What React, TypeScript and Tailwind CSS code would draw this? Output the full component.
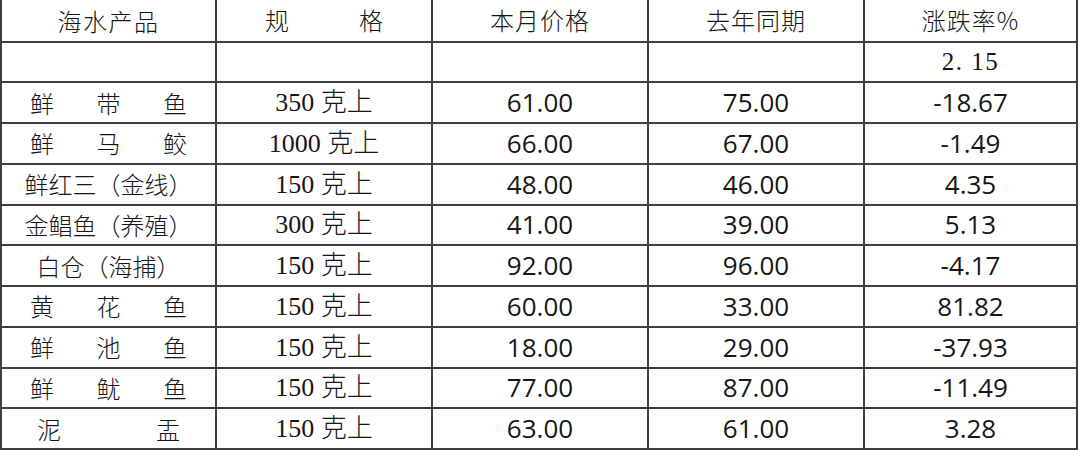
import React from "react";

type Row = {
  name: string[] | string;
  nameW?: string;
  spec: string;
  a: string;
  b: string;
  c: string;
};

const rows: Row[] = [
  { name: ["鲜", "带", "鱼"], spec: "350 克上", a: "61.00", b: "75.00", c: "-18.67" },
  { name: ["鲜", "马", "鲛"], spec: "1000 克上", a: "66.00", b: "67.00", c: "-1.49" },
  { name: "鲜红三（金线）", spec: "150 克上", a: "48.00", b: "46.00", c: "4.35" },
  { name: "金鲳鱼（养殖）", spec: "300 克上", a: "41.00", b: "39.00", c: "5.13" },
  { name: "白仓（海捕）", spec: "150 克上", a: "92.00", b: "96.00", c: "-4.17" },
  { name: ["黄", "花", "鱼"], spec: "150 克上", a: "60.00", b: "33.00", c: "81.82" },
  { name: ["鲜", "池", "鱼"], spec: "150 克上", a: "18.00", b: "29.00", c: "-37.93" },
  { name: ["鲜", "鱿", "鱼"], spec: "150 克上", a: "77.00", b: "87.00", c: "-11.49" },
  { name: ["泥", "盂"], nameW: "w-[143px]", spec: "150 克上", a: "63.00", b: "61.00", c: "3.28" },
];

const cjk = "[font-family:'Noto_Sans_CJK_SC',sans-serif]";
const serif = "[font-family:'Liberation_Serif','Noto_Sans_CJK_SC',serif]";
const num = "[font-family:'Open_Sans',sans-serif]";

const cell =
  "flex items-center justify-center border-r-2 border-b-2 border-[#3f3f3f] text-[#161616]";

export default function App() {
  return (
    <div className="w-[1080px] h-[450px] overflow-hidden bg-white">
      <div className="w-[1078px] border-l-2 border-[#3f3f3f] grid grid-cols-[215px_216px_216px_216px_213px]">
        {/* header */}
        <div className={`${cell} h-[42.5px] ${cjk} text-[24px] font-light tracking-[1.5px]`}>
          <span className="pt-[1px]">海水产品</span>
        </div>
        <div className={`${cell} h-[42.5px] ${cjk} text-[24px] font-light`}>
          <div className="w-[118px] flex justify-between">
            <span>规</span>
            <span>格</span>
          </div>
        </div>
        <div className={`${cell} h-[42.5px] ${cjk} text-[24px] font-light tracking-[1px]`}>本月价格</div>
        <div className={`${cell} h-[42.5px] ${cjk} text-[24px] font-light tracking-[1px]`}>去年同期</div>
        <div className={`${cell} h-[42.5px] ${cjk} text-[24px] font-light tracking-[1px]`}>涨跌率%</div>

        {/* blank row */}
        <div className={`${cell} h-[40.75px]`} />
        <div className={`${cell} h-[40.75px]`} />
        <div className={`${cell} h-[40.75px]`} />
        <div className={`${cell} h-[40.75px]`} />
        <div className={`${cell} h-[40.75px] ${serif} text-[25px] tracking-[1.5px] text-[#3a3a3a]`}>2. 15</div>

        {rows.map((r, i) => (
          <React.Fragment key={i}>
            <div className={`${cell} h-[40.75px] ${cjk} text-[24px] font-light`}>
              {Array.isArray(r.name) ? (
                <div className={`${r.nameW ?? "w-[157px]"} flex justify-between`}>
                  {r.name.map((ch, j) => (
                    <span key={j}>{ch}</span>
                  ))}
                </div>
              ) : (
                <span>{r.name}</span>
              )}
            </div>
            <div className={`${cell} h-[40.75px] ${serif} text-[26px] font-light`}>{r.spec}</div>
            <div className={`${cell} h-[40.75px] ${num} text-[26px]`}>{r.a}</div>
            <div className={`${cell} h-[40.75px] ${num} text-[26px]`}>{r.b}</div>
            <div className={`${cell} h-[40.75px] ${num} text-[26px]`}>{r.c}</div>
          </React.Fragment>
        ))}
      </div>
    </div>
  );
}
